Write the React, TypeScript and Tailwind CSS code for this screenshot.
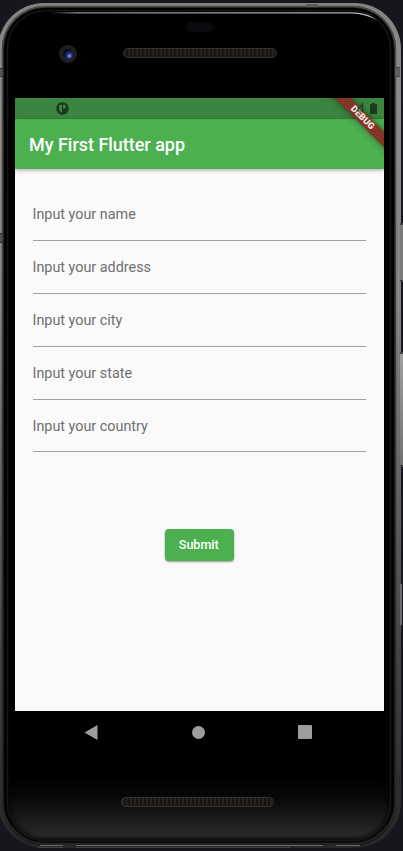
import React from 'react';

const fields = ['name', 'address', 'city', 'state', 'country'];

function Grille({ className }: { className: string }) {
  return (
    <div
      className={`h-[10px] rounded-full border border-[#35322f] bg-[repeating-linear-gradient(90deg,#24211e_0px,#24211e_2px,#171513_2px,#171513_4px)] ${className}`}
    />
  );
}

/* Metal rim highlights, antenna bands and the reflection on the glass */
function Reflections() {
  return (
    <svg className="pointer-events-none absolute inset-0" width="403" height="851" viewBox="0 0 403 851" fill="none">
      <defs>
        <linearGradient id="glass" x1="50" x2="380" y1="0" y2="0" gradientUnits="userSpaceOnUse">
          <stop stopColor="#889090" stopOpacity="0" />
          <stop offset=".08" stopColor="#889090" />
          <stop offset="1" stopColor="#b5bab9" />
        </linearGradient>
        <linearGradient id="rim" x1="0" x2="0" y1="0" y2="851" gradientUnits="userSpaceOnUse">
          <stop stopColor="#4c4c4c" />
          <stop offset=".35" stopColor="#3c3c3c" />
          <stop offset=".75" stopColor="#282828" />
          <stop offset="1" stopColor="#242424" />
        </linearGradient>
      </defs>
      <path d="M50 12.200H352Q370 12.500 379 21.500Q368 14.500 352 13.600H50Z" fill="url(#glass)" />
      <rect x="2.500" y="6.500" width="393" height="837" rx="43" stroke="url(#rim)" strokeWidth="1.400" />
      <rect x="7.500" y="10.500" width="383" height="830" rx="38" stroke="#161616" strokeWidth="1.500" />
      <rect x="306" y="4" width="12" height="3" fill="#5c5c5c" />
      <rect x="395" y="68" width="5" height="8" fill="#5f5f5f" />
      <path d="M395 67.500h5M395 76.500h5" stroke="#444" />
      <rect x="0" y="69" width="2" height="7" fill="#555" />
      <path d="M0 68.500h3M0 76.500h3" stroke="#333" />
      <rect x="0" y="234" width="2" height="8" fill="#505050" />
      <path d="M0 233.500h3M0 242.500h3" stroke="#2b2b2b" />
      <rect x="395" y="775" width="5" height="8" fill="#292929" />
      <path d="M40 845.500H360" stroke="#6d6d6d" />
      <path d="M38 847.500H290" stroke="#444" />
      <rect x="63" y="844" width="13" height="4" fill="#272727" />
      <rect x="323" y="844" width="13" height="4" fill="#272727" />
    </svg>
  );
}

export default function App() {
  return (
    <div className="relative h-[851px] w-[403px] overflow-hidden bg-[#15171c] [font-family:Roboto,sans-serif]">
      <div className="absolute left-[400px] top-[223px] h-[59px] w-[3px] border-y-2 border-[#444] bg-[#7b7b7b]" />
      <div className="absolute left-[400px] top-[352px] h-[115px] w-[3px] border-y-2 border-[#444] bg-[linear-gradient(#a0a0a0,#707070)]" />
      <div className="absolute left-[400px] top-[584px] h-[41px] w-[2px] bg-[#6c6c6c]" />

      <div className="-ml-[2px] flex h-[851px] w-[403px] flex-col pt-[3px]">
        <div className="h-[845px] rounded-[46px] bg-[linear-gradient(#828482_0%,#8b8b8b_12%,#858585_35%,#666_55%,#424242_78%,#262626_100%)] pb-[4px] pl-[6px] pr-[7px] pt-[5px]">
          <div className="flex h-full flex-col rounded-[41px] bg-[linear-gradient(#000_0%,#000_92%,#080808_94.500%,#1b1b1b_97%,#2a2a2a_99%,#111_100%)] px-[11px] shadow-[0_0_0_2px_#1c1c1c,inset_0_0_6px_4px_#000]">
            <div className="flex h-[90px] flex-col items-center">
              <div className="mt-[14px] h-[10px] w-[27px] rounded-full bg-[#080a0e]" />
              <div className="mt-[13px] flex w-full items-center">
                <div className="ml-[44px] flex size-[18px] items-center justify-center rounded-full bg-[#211f20]">
                  <div className="size-[10px] rounded-full bg-[radial-gradient(circle_at_65%_70%,#a8b5ff_0%,#3a4db8_18%,#161e54_40%,#05070f_72%)]" />
                </div>
                <Grille className="ml-[46px] -mt-[2px] w-[154px]" />
              </div>
            </div>

            <main className="relative flex h-[613px] w-[369px] shrink-0 flex-col overflow-hidden bg-[#fafafa]">
              <div className="h-[21px] shrink-0 bg-[#3b8540] pl-[41px] pt-[4px]">
                <svg width="13" height="13" viewBox="0 0 13 13">
                  <circle cx="6.500" cy="6.500" r="6.300" fill="#193d1c" />
                  <path d="M3.200 3H6V10.500Q3.200 9.800 3.200 7.500ZM7 3H8.300Q10 3 10 4.700T8.300 6.400H7Z" fill="#3b8540" />
                </svg>
              </div>
              <header className="z-10 flex h-[50px] shrink-0 items-center bg-[#4caf50] pl-[14px] pt-[1px] shadow-[0_1px_4px_rgba(0,0,0,0.35)]">
                <h1 className="whitespace-nowrap text-[17.950px] font-medium leading-[24px] text-white">My First Flutter app</h1>
              </header>
              <form className="flex flex-col pl-[17.500px] pr-[18px] pt-[19px]">
                {fields.map((field) => (
                  <label key={field} className="flex h-[52.880px] flex-col border-b border-[#a0a0a0] pt-[16px]">
                    <span className="text-[14.360px] leading-[22px] text-[#6f6f6f]">Input your {field}</span>
                  </label>
                ))}
                <button
                  type="button"
                  className="mt-[76.600px] flex h-[32px] w-[69px] items-center justify-center self-center rounded-[4px] bg-[#4caf50] pr-[1px] pt-[1px] text-[12.560px] font-medium text-white shadow-[0_1px_2px_rgba(0,0,0,0.4)]"
                >
                  Submit
                </button>
              </form>
              <div className="absolute left-[298px] top-[15px] z-20 flex h-[11px] w-[100px] rotate-45 items-center justify-center bg-[#853524] pr-[2px] text-[9.150px] font-black leading-none text-[#f3e8e6] shadow-[0_0_6px_rgba(0,0,0,0.5)]">
                DEBUG
              </div>
              <svg className="absolute left-[341px] top-[4px] z-30" width="22" height="13" viewBox="0 0 22 13">
                <path d="M1 9L6.500 1.800V9ZM6.500 9V10.500" stroke="#193d1c" strokeWidth="1.200" fill="none" />
                <path d="M14 2.200h2V1h3v1.200h2V12H14Z" fill="#193d1c" />
              </svg>
            </main>

            <nav className="flex h-[42px] items-center">
              <svg className="ml-[69px]" width="15" height="17" viewBox="0 0 15 17"><path d="M.5 8.500L13.500 1V16Z" fill="#9d9d9d" /></svg>
              <div className="ml-[93px] size-[13px] rounded-full bg-[#9d9d9d]" />
              <div className="ml-[93px] size-[14px] rounded-[1px] bg-[#9d9d9d]" />
            </nav>
            <Grille className="ml-[106px] mt-[44px] w-[153px]" />
          </div>
        </div>
      </div>
      <Reflections />
    </div>
  );
}
